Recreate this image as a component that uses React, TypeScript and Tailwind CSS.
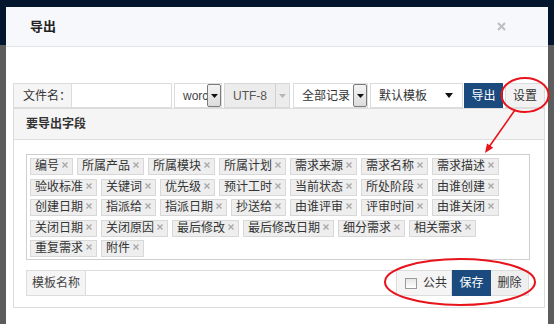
import React from "react";

const rows: string[] = [
  "编号", "所属产品", "所属模块", "所属计划", "需求来源", "需求名称", "需求描述",
  "验收标准", "关键词", "优先级", "预计工时", "当前状态", "所处阶段", "由谁创建",
  "创建日期", "指派给", "指派日期", "抄送给", "由谁评审", "评审时间", "由谁关闭",
  "关闭日期", "关闭原因", "最后修改", "最后修改日期", "细分需求", "相关需求",
  "重复需求", "附件",
];

function Tag({ label }: { label: string }) {
  return (
    <div className="flex h-[17px] items-start border border-[#d8d8d8] bg-[#eeeeee] pl-[4px] pr-[4px] text-[12px] leading-[15px] text-[#333]">
      <span className="whitespace-nowrap">{label}</span>
      <svg className="ml-[3px] mt-[3px]" width="6" height="6" viewBox="0 0 6 6">
        <path d="M0.5 0.5 L5.5 5.5 M5.5 0.5 L0.5 5.5" stroke="#a8a8a8" strokeWidth="1.4" />
      </svg>
    </div>
  );
}

function ArrowBtn({ dark = true }: { dark?: boolean }) {
  return (
    <div
      className={
        dark
          ? "flex h-full w-[14px] items-center justify-center border border-[#7a7a7a] bg-[linear-gradient(#f4f4f4,#dcdcdc)] rounded-[2px]"
          : "flex h-full w-[14px] items-center justify-center border-l border-[#d0d0d0]"
      }
    >
      <svg width="7" height="4" viewBox="0 0 7 4">
        <path d="M0 0 L7 0 L3.5 4 Z" fill={dark ? "#111" : "#b5b5b5"} />
      </svg>
    </div>
  );
}

export default function App() {
  return (
    <div className="relative h-[324px] w-[554px] overflow-hidden bg-[linear-gradient(to_bottom,#03162d_0,#03162d_45px,#5c5c5c_45px,#5c5c5c_100%)] font-['Liberation_Sans','Noto_Sans_CJK_SC',sans-serif] text-[#333]">
      <div className="ml-[6px] mt-[7px] h-[340px] w-[542px] bg-white">
        {/* header */}
        <div className="flex h-[40px] items-center justify-between border-b border-[#e3e5ea] bg-[#f7f8fc] pl-[24px] pr-[42px]">
          <span className="text-[13px] font-bold text-[#222]">导出</span>
          <svg width="9" height="9" viewBox="0 0 9 9">
            <path d="M1 1 L8 8 M8 1 L1 8" stroke="#bfbfbf" strokeWidth="2" />
          </svg>
        </div>

        {/* body */}
        <div className="pl-[7px] pr-[3px] pt-[36px]">
          {/* toolbar */}
          <div className="flex h-[25px] text-[12px]">
            <div className="flex w-[59px] items-center border border-[#dcdcdc] bg-[#f5f5f5] pl-[9px]">文件名：</div>
            <div className="w-[100px] border border-l-0 border-[#dcdcdc] bg-white" />
            <div className="ml-[2px] flex w-[48px] items-center border border-[#dcdcdc] bg-white">
              <span className="w-[33px] overflow-hidden whitespace-nowrap pl-[8px] text-[#444]">worc</span>
              <ArrowBtn />
            </div>
            <div className="ml-[2px] flex w-[66px] items-center border border-[#d8d8d8] bg-[#ececec]">
              <span className="flex-1 pl-[8px] text-[#555]">UTF-8</span>
              <ArrowBtn dark={false} />
            </div>
            <div className="ml-[3px] flex w-[75px] items-center border border-[#dcdcdc] bg-white">
              <span className="flex-1 pl-[8px] text-[#333]">全部记录</span>
              <ArrowBtn />
            </div>
            <div className="ml-[2px] flex w-[93px] items-center border border-[#dcdcdc] bg-white pl-[8px] pr-[9px]">
              <span className="flex-1">默认模板</span>
              <svg width="8" height="5" viewBox="0 0 8 5">
                <path d="M0 0 L8 0 L4 5 Z" fill="#111" />
              </svg>
            </div>
            <div className="ml-[1px] flex w-[39px] items-center justify-center bg-[#1b4b7e] text-white">导出</div>
            <div className="ml-[2px] flex w-[40px] items-center justify-center border border-[#dcdcdc] bg-[#f2f2f2] text-[#333]">设置</div>
          </div>

          {/* panel */}
          <div className="w-[532px] border border-[#dcdcdc]">
            <div className="flex h-[31px] items-center border-b border-[#dcdcdc] bg-[#f5f5f5] pl-[12px] text-[12px] font-bold text-[#333]">
              要导出字段
            </div>
            <div className="pb-[11px] pl-[12px] pt-[14px]">
              <div className="h-[106px] w-[504px] border border-[#cfcfcf] pl-[3px] pt-[3px]">
                <div className="flex flex-wrap gap-x-[4px] gap-y-[3.6px]">
                  {rows.map((r) => (
                    <Tag key={r} label={r} />
                  ))}
                </div>
              </div>
              <div className="mt-[10px] flex h-[26px] w-[503px] text-[12px]">
                <div className="flex w-[60px] items-center justify-center border border-[#dcdcdc] bg-[#f5f5f5] text-[#444]">模板名称</div>
                <div className="flex-1 border border-l-0 border-[#dcdcdc] bg-white" />
                <div className="flex w-[55px] items-center border border-l-0 border-[#dcdcdc] bg-[#f5f5f5] pl-[8px]">
                  <div className="h-[11px] w-[12px] border border-[#9a9a9a] bg-[linear-gradient(#e6e6e6,#ffffff)]" />
                  <span className="ml-[6px] text-[#333]">公共</span>
                </div>
                <div className="flex w-[39px] items-center justify-center bg-[#1b4b7e] text-white">保存</div>
                <div className="flex w-[38px] items-center justify-center border border-l-0 border-[#dcdcdc] bg-[#efefef] text-[#333]">删除</div>
              </div>
            </div>
          </div>
        </div>
      </div>

      {/* red annotations */}
      <svg className="pointer-events-none absolute left-0 top-0" width="554" height="324" viewBox="0 0 554 324">
        <ellipse cx="525" cy="95" rx="23.5" ry="17" fill="none" stroke="#e8141c" strokeWidth="2" />
        <line x1="515" y1="110" x2="489" y2="147" stroke="#e8141c" strokeWidth="1.6" />
        <polygon points="485,153 493.2,147.8 487,143.4" fill="#e8141c" />
        <ellipse cx="460" cy="282" rx="75" ry="23" fill="none" stroke="#e8141c" strokeWidth="2" />
      </svg>
    </div>
  );
}
